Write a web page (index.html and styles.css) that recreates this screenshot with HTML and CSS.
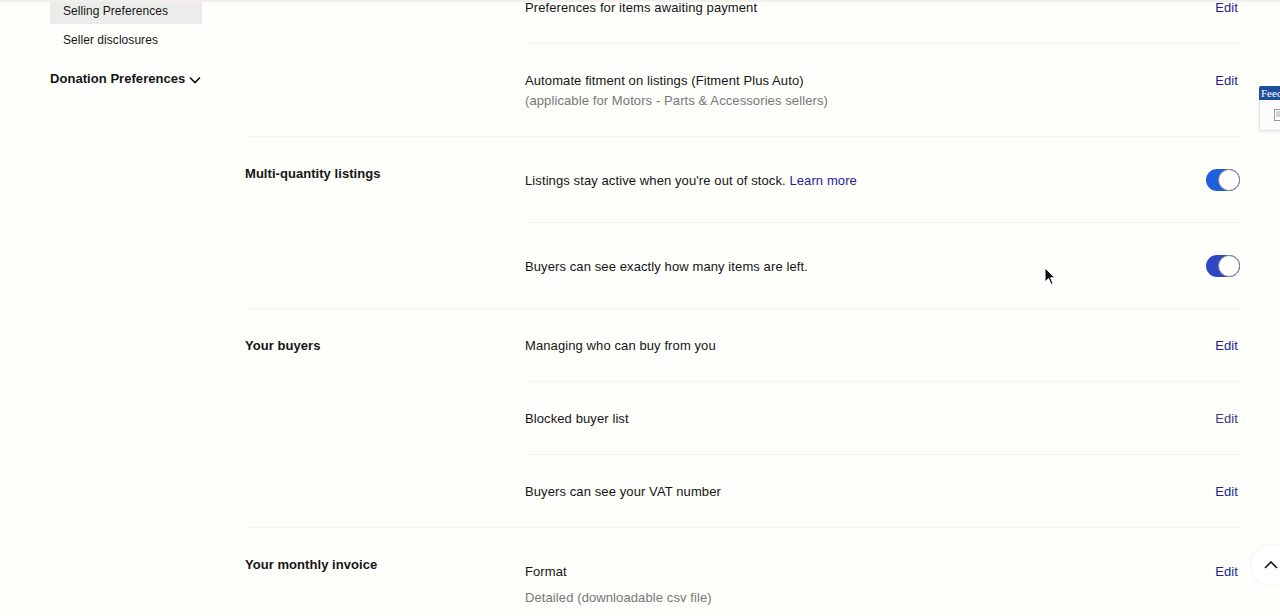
FILE: index.html
```html
<!DOCTYPE html>
<html>
<head>
<meta charset="utf-8">
<link rel="stylesheet" href="styles.css">
</head>
<body>
<div class="topline"></div>
<div class="page">
  <nav class="sidenav">
    <a class="nav-item active">Selling Preferences</a>
    <a class="nav-item">Seller disclosures</a>
    <div class="nav-group">Donation Preferences
      <svg class="chev" width="12" height="8" viewBox="0 0 12 8"><path d="M1 1.5 L6 6.5 L11 1.5" fill="none" stroke="#111" stroke-width="1.6"/></svg>
    </div>
  </nav>
  <main class="main">
    <section class="section">
      <div class="sec-title"></div>
      <div class="rows">
        <div class="row">
          <div class="row-text">Preferences for items awaiting payment</div>
          <a class="edit">Edit</a>
        </div>
        <div class="row">
          <div class="row-text">Automate fitment on listings (Fitment Plus Auto)<div class="sub">(applicable for Motors - Parts &amp; Accessories sellers)</div></div>
          <a class="edit">Edit</a>
        </div>
      </div>
    </section>
    <section class="section">
      <div class="sec-title">Multi-quantity listings</div>
      <div class="rows">
        <div class="row row-toggle">
          <div class="row-text">Listings stay active when you're out of stock. <a class="link">Learn more</a></div>
          <span class="toggle"><span class="knob"></span></span>
        </div>
        <div class="row row-toggle">
          <div class="row-text">Buyers can see exactly how many items are left.</div>
          <span class="toggle alt"><span class="knob"></span></span>
        </div>
      </div>
    </section>
    <section class="section">
      <div class="sec-title">Your buyers</div>
      <div class="rows">
        <div class="row">
          <div class="row-text">Managing who can buy from you</div>
          <a class="edit">Edit</a>
        </div>
        <div class="row">
          <div class="row-text">Blocked buyer list</div>
          <a class="edit visited">Edit</a>
        </div>
        <div class="row">
          <div class="row-text">Buyers can see your VAT number</div>
          <a class="edit">Edit</a>
        </div>
      </div>
    </section>
    <section class="section last">
      <div class="sec-title">Your monthly invoice</div>
      <div class="rows">
        <div class="row row-format">
          <div class="row-text">Format<div class="sub sub-wide">Detailed (downloadable csv file)</div></div>
          <a class="edit">Edit</a>
        </div>
      </div>
    </section>
  </main>
</div>

<div class="feedback">
  <div class="fb-tab">Feedback</div>
  <div class="fb-box">
    <svg width="10" height="12" viewBox="0 0 10 12"><rect x="0.5" y="0.5" width="9" height="11" fill="#fff" stroke="#999"/><path d="M2 3h6M2 5h6M2 7h6" stroke="#aaa" stroke-width="1"/></svg>
  </div>
</div>

<button class="to-top" aria-label="Back to top">
  <svg width="14" height="8" viewBox="0 0 14 8"><path d="M1 7 L7 1 L13 7" fill="none" stroke="#111" stroke-width="1.6"/></svg>
</button>

<svg class="cursor" width="12" height="19" viewBox="0 0 12 19"><path d="M1 1 L1 15 L4.5 11.5 L7 17.5 L9 16.6 L6.6 10.8 L11 10.8 Z" fill="#111" stroke="#fff" stroke-width="1"/></svg>
</body>
</html>
```

FILE: styles.css
```css
html, body {
  margin: 0;
  padding: 0;
  background: #fefefb;
  overflow: hidden;
  height: 616px;
  font-family: "Liberation Sans", Arial, Helvetica, sans-serif;
  color: #151515;
}

.topline {
  position: fixed;
  top: 0;
  left: 0;
  right: 0;
  height: 2px;
  background: #f4eeec;
  z-index: 5;
}

.page {
  display: flex;
  margin-top: -29px;
}

.sidenav {
  width: 152px;
  margin-left: 50px;
  padding-top: 27px;
  display: flex;
  flex-direction: column;
  gap: 3px;
  flex-shrink: 0;
}

.nav-item {
  display: block;
  font-size: 12px;
  line-height: 16px;
  padding: 5px 13px;
  color: #151515;
  letter-spacing: 0.05px;
}

.nav-item.active {
  background: #ececea;
}

.nav-group {
  margin-top: 14px;
  font-size: 13px;
  font-weight: bold;
  line-height: 17px;
  display: flex;
  align-items: center;
  gap: 4px;
  letter-spacing: 0.05px;
}

.chev {
  margin-top: 2px;
}

.main {
  margin-left: 43px;
  width: 995px;
  flex-shrink: 0;
}

.section {
  display: flex;
  border-bottom: 1px solid #f4f4f0;
}

.section.last {
  border-bottom: none;
}

.sec-title {
  width: 280px;
  flex-shrink: 0;
  padding-top: 28px;
  font-size: 13px;
  font-weight: bold;
  line-height: 17px;
  letter-spacing: 0.05px;
}

.rows {
  flex: 1;
}

.row {
  display: flex;
  justify-content: space-between;
  align-items: flex-start;
  padding: 28px 2px 27px 0;
  border-bottom: 1px solid #f4f4f0;
  font-size: 13px;
  line-height: 17px;
  letter-spacing: 0.1px;
}

.row:last-child {
  border-bottom: none;
}

.row-toggle {
  align-items: center;
  padding: 32px 0 31px 0;
}

.row-format {
  padding-top: 35px;
  padding-bottom: 8px;
}

.sub {
  color: #777;
  margin-top: 3px;
}

.sub-wide {
  margin-top: 9px;
}

.edit {
  color: #231f96;
  cursor: pointer;
}

.edit.visited {
  color: #3d3a8a;
}

.link {
  color: #1d1ba2;
}

.toggle {
  position: relative;
  display: inline-block;
  width: 34px;
  height: 22px;
  border-radius: 11px;
  background: #1f5fdf;
}

.toggle.alt {
  background: #2e48c4;
}

.knob {
  position: absolute;
  right: 0;
  top: 0;
  width: 20px;
  height: 20px;
  border-radius: 50%;
  background: #fff;
  border: 1px solid #8a8a8a;
}

.feedback {
  position: fixed;
  top: 86px;
  left: 1259px;
  width: 50px;
}

.fb-tab {
  background: #1e4f9c;
  color: #fff;
  font-family: "Liberation Serif", "Times New Roman", serif;
  font-size: 11px;
  line-height: 14px;
  padding-left: 2px;
  border-radius: 2px 0 0 0;
}

.fb-box {
  height: 30px;
  background: #fcfcfc;
  border: 1px solid #e4e4e4;
  border-top: none;
  box-shadow: 0 1px 3px rgba(0,0,0,0.08);
  display: flex;
  align-items: center;
  padding-left: 14px;
}

.to-top {
  position: fixed;
  left: 1252px;
  top: 545px;
  width: 40px;
  height: 40px;
  border-radius: 50%;
  border: none;
  background: #fff;
  box-shadow: 0 0 6px rgba(0,0,0,0.06);
  display: flex;
  align-items: center;
  justify-content: flex-start;
  padding: 0 0 0 12px;
}

.cursor {
  position: fixed;
  left: 1044px;
  top: 267px;
}
```
